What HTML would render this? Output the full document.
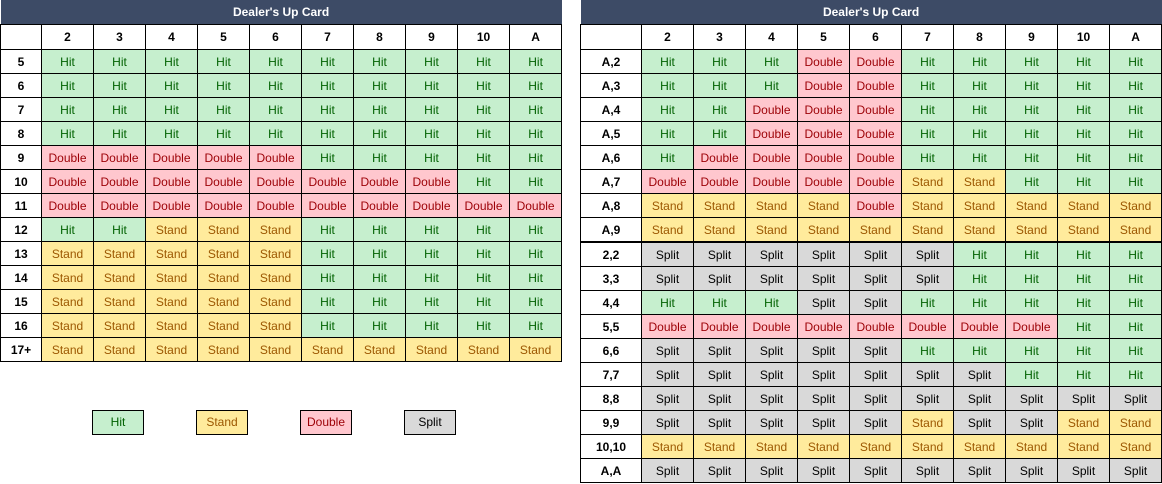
<!DOCTYPE html>
<html><head><meta charset="utf-8"><style>
body{margin:0;width:1162px;height:484px;background:#fff;position:relative;overflow:hidden;font-family:"Liberation Sans",sans-serif;font-size:12px}
table{position:absolute;top:0;border-collapse:collapse;table-layout:fixed}
td{border:1px solid #000;height:23px;padding:0;text-align:center;vertical-align:middle;white-space:nowrap}
tr.t td{background:#3d4b66;color:#fff;font-weight:bold;border:none;height:24px}
tr.c td{font-weight:bold;height:24px}
td.l{font-weight:bold}
.h{background:#c6efce;color:#006100}
.d{background:#ffc7ce;color:#9c0006}
.s{background:#ffeb9c;color:#9c5700}
.p{background:#d9d9d9;color:#000}
tr.sep td{border-top:2px solid #000}
.lg{position:absolute;top:410px;width:52px;height:25px;border:1px solid #000;box-sizing:border-box;text-align:center;line-height:23px}
</style></head><body>
<table style="left:0;width:561px"><colgroup><col style="width:41px"><col span="10" style="width:52px"></colgroup>
<tr class="t"><td colspan="11">Dealer's Up Card</td></tr>
<tr class="c"><td></td><td>2</td><td>3</td><td>4</td><td>5</td><td>6</td><td>7</td><td>8</td><td>9</td><td>10</td><td>A</td></tr>
<tr><td class="l">5</td><td class="h">Hit</td><td class="h">Hit</td><td class="h">Hit</td><td class="h">Hit</td><td class="h">Hit</td><td class="h">Hit</td><td class="h">Hit</td><td class="h">Hit</td><td class="h">Hit</td><td class="h">Hit</td></tr>
<tr><td class="l">6</td><td class="h">Hit</td><td class="h">Hit</td><td class="h">Hit</td><td class="h">Hit</td><td class="h">Hit</td><td class="h">Hit</td><td class="h">Hit</td><td class="h">Hit</td><td class="h">Hit</td><td class="h">Hit</td></tr>
<tr><td class="l">7</td><td class="h">Hit</td><td class="h">Hit</td><td class="h">Hit</td><td class="h">Hit</td><td class="h">Hit</td><td class="h">Hit</td><td class="h">Hit</td><td class="h">Hit</td><td class="h">Hit</td><td class="h">Hit</td></tr>
<tr><td class="l">8</td><td class="h">Hit</td><td class="h">Hit</td><td class="h">Hit</td><td class="h">Hit</td><td class="h">Hit</td><td class="h">Hit</td><td class="h">Hit</td><td class="h">Hit</td><td class="h">Hit</td><td class="h">Hit</td></tr>
<tr><td class="l">9</td><td class="d">Double</td><td class="d">Double</td><td class="d">Double</td><td class="d">Double</td><td class="d">Double</td><td class="h">Hit</td><td class="h">Hit</td><td class="h">Hit</td><td class="h">Hit</td><td class="h">Hit</td></tr>
<tr><td class="l">10</td><td class="d">Double</td><td class="d">Double</td><td class="d">Double</td><td class="d">Double</td><td class="d">Double</td><td class="d">Double</td><td class="d">Double</td><td class="d">Double</td><td class="h">Hit</td><td class="h">Hit</td></tr>
<tr><td class="l">11</td><td class="d">Double</td><td class="d">Double</td><td class="d">Double</td><td class="d">Double</td><td class="d">Double</td><td class="d">Double</td><td class="d">Double</td><td class="d">Double</td><td class="d">Double</td><td class="d">Double</td></tr>
<tr><td class="l">12</td><td class="h">Hit</td><td class="h">Hit</td><td class="s">Stand</td><td class="s">Stand</td><td class="s">Stand</td><td class="h">Hit</td><td class="h">Hit</td><td class="h">Hit</td><td class="h">Hit</td><td class="h">Hit</td></tr>
<tr><td class="l">13</td><td class="s">Stand</td><td class="s">Stand</td><td class="s">Stand</td><td class="s">Stand</td><td class="s">Stand</td><td class="h">Hit</td><td class="h">Hit</td><td class="h">Hit</td><td class="h">Hit</td><td class="h">Hit</td></tr>
<tr><td class="l">14</td><td class="s">Stand</td><td class="s">Stand</td><td class="s">Stand</td><td class="s">Stand</td><td class="s">Stand</td><td class="h">Hit</td><td class="h">Hit</td><td class="h">Hit</td><td class="h">Hit</td><td class="h">Hit</td></tr>
<tr><td class="l">15</td><td class="s">Stand</td><td class="s">Stand</td><td class="s">Stand</td><td class="s">Stand</td><td class="s">Stand</td><td class="h">Hit</td><td class="h">Hit</td><td class="h">Hit</td><td class="h">Hit</td><td class="h">Hit</td></tr>
<tr><td class="l">16</td><td class="s">Stand</td><td class="s">Stand</td><td class="s">Stand</td><td class="s">Stand</td><td class="s">Stand</td><td class="h">Hit</td><td class="h">Hit</td><td class="h">Hit</td><td class="h">Hit</td><td class="h">Hit</td></tr>
<tr><td class="l">17+</td><td class="s">Stand</td><td class="s">Stand</td><td class="s">Stand</td><td class="s">Stand</td><td class="s">Stand</td><td class="s">Stand</td><td class="s">Stand</td><td class="s">Stand</td><td class="s">Stand</td><td class="s">Stand</td></tr>
</table>

<table style="left:580px;width:581px"><colgroup><col style="width:61px"><col span="10" style="width:52px"></colgroup>
<tr class="t"><td colspan="11">Dealer's Up Card</td></tr>
<tr class="c"><td></td><td>2</td><td>3</td><td>4</td><td>5</td><td>6</td><td>7</td><td>8</td><td>9</td><td>10</td><td>A</td></tr>
<tr><td class="l">A,2</td><td class="h">Hit</td><td class="h">Hit</td><td class="h">Hit</td><td class="d">Double</td><td class="d">Double</td><td class="h">Hit</td><td class="h">Hit</td><td class="h">Hit</td><td class="h">Hit</td><td class="h">Hit</td></tr>
<tr><td class="l">A,3</td><td class="h">Hit</td><td class="h">Hit</td><td class="h">Hit</td><td class="d">Double</td><td class="d">Double</td><td class="h">Hit</td><td class="h">Hit</td><td class="h">Hit</td><td class="h">Hit</td><td class="h">Hit</td></tr>
<tr><td class="l">A,4</td><td class="h">Hit</td><td class="h">Hit</td><td class="d">Double</td><td class="d">Double</td><td class="d">Double</td><td class="h">Hit</td><td class="h">Hit</td><td class="h">Hit</td><td class="h">Hit</td><td class="h">Hit</td></tr>
<tr><td class="l">A,5</td><td class="h">Hit</td><td class="h">Hit</td><td class="d">Double</td><td class="d">Double</td><td class="d">Double</td><td class="h">Hit</td><td class="h">Hit</td><td class="h">Hit</td><td class="h">Hit</td><td class="h">Hit</td></tr>
<tr><td class="l">A,6</td><td class="h">Hit</td><td class="d">Double</td><td class="d">Double</td><td class="d">Double</td><td class="d">Double</td><td class="h">Hit</td><td class="h">Hit</td><td class="h">Hit</td><td class="h">Hit</td><td class="h">Hit</td></tr>
<tr><td class="l">A,7</td><td class="d">Double</td><td class="d">Double</td><td class="d">Double</td><td class="d">Double</td><td class="d">Double</td><td class="s">Stand</td><td class="s">Stand</td><td class="h">Hit</td><td class="h">Hit</td><td class="h">Hit</td></tr>
<tr><td class="l">A,8</td><td class="s">Stand</td><td class="s">Stand</td><td class="s">Stand</td><td class="s">Stand</td><td class="d">Double</td><td class="s">Stand</td><td class="s">Stand</td><td class="s">Stand</td><td class="s">Stand</td><td class="s">Stand</td></tr>
<tr><td class="l">A,9</td><td class="s">Stand</td><td class="s">Stand</td><td class="s">Stand</td><td class="s">Stand</td><td class="s">Stand</td><td class="s">Stand</td><td class="s">Stand</td><td class="s">Stand</td><td class="s">Stand</td><td class="s">Stand</td></tr>
<tr class="sep"><td class="l">2,2</td><td class="p">Split</td><td class="p">Split</td><td class="p">Split</td><td class="p">Split</td><td class="p">Split</td><td class="p">Split</td><td class="h">Hit</td><td class="h">Hit</td><td class="h">Hit</td><td class="h">Hit</td></tr>
<tr><td class="l">3,3</td><td class="p">Split</td><td class="p">Split</td><td class="p">Split</td><td class="p">Split</td><td class="p">Split</td><td class="p">Split</td><td class="h">Hit</td><td class="h">Hit</td><td class="h">Hit</td><td class="h">Hit</td></tr>
<tr><td class="l">4,4</td><td class="h">Hit</td><td class="h">Hit</td><td class="h">Hit</td><td class="p">Split</td><td class="p">Split</td><td class="h">Hit</td><td class="h">Hit</td><td class="h">Hit</td><td class="h">Hit</td><td class="h">Hit</td></tr>
<tr><td class="l">5,5</td><td class="d">Double</td><td class="d">Double</td><td class="d">Double</td><td class="d">Double</td><td class="d">Double</td><td class="d">Double</td><td class="d">Double</td><td class="d">Double</td><td class="h">Hit</td><td class="h">Hit</td></tr>
<tr><td class="l">6,6</td><td class="p">Split</td><td class="p">Split</td><td class="p">Split</td><td class="p">Split</td><td class="p">Split</td><td class="h">Hit</td><td class="h">Hit</td><td class="h">Hit</td><td class="h">Hit</td><td class="h">Hit</td></tr>
<tr><td class="l">7,7</td><td class="p">Split</td><td class="p">Split</td><td class="p">Split</td><td class="p">Split</td><td class="p">Split</td><td class="p">Split</td><td class="p">Split</td><td class="h">Hit</td><td class="h">Hit</td><td class="h">Hit</td></tr>
<tr><td class="l">8,8</td><td class="p">Split</td><td class="p">Split</td><td class="p">Split</td><td class="p">Split</td><td class="p">Split</td><td class="p">Split</td><td class="p">Split</td><td class="p">Split</td><td class="p">Split</td><td class="p">Split</td></tr>
<tr><td class="l">9,9</td><td class="p">Split</td><td class="p">Split</td><td class="p">Split</td><td class="p">Split</td><td class="p">Split</td><td class="s">Stand</td><td class="p">Split</td><td class="p">Split</td><td class="s">Stand</td><td class="s">Stand</td></tr>
<tr><td class="l">10,10</td><td class="s">Stand</td><td class="s">Stand</td><td class="s">Stand</td><td class="s">Stand</td><td class="s">Stand</td><td class="s">Stand</td><td class="s">Stand</td><td class="s">Stand</td><td class="s">Stand</td><td class="s">Stand</td></tr>
<tr><td class="l">A,A</td><td class="p">Split</td><td class="p">Split</td><td class="p">Split</td><td class="p">Split</td><td class="p">Split</td><td class="p">Split</td><td class="p">Split</td><td class="p">Split</td><td class="p">Split</td><td class="p">Split</td></tr>
</table>

<div class="lg h" style="left:92px">Hit</div>
<div class="lg s" style="left:196px">Stand</div>
<div class="lg d" style="left:300px">Double</div>
<div class="lg p" style="left:404px">Split</div>
</body></html>
